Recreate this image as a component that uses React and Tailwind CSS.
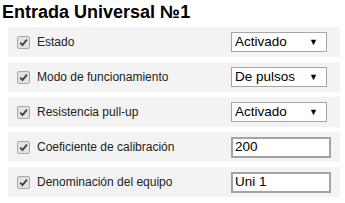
import React from "react";

const rows = [
  { label: "Estado", type: "select", value: "Activado" },
  { label: "Modo de funcionamiento", type: "select", value: "De pulsos" },
  { label: "Resistencia pull-up", type: "select", value: "Activado" },
  { label: "Coeficiente de calibración", type: "input", value: "200" },
  { label: "Denominación del equipo", type: "input", value: "Uni 1" },
];

function Check() {
  return (
    <span className="flex h-[13px] w-[13px] items-center justify-center rounded-[2px] border border-[#a8a8a8] bg-[#e3e3e3]">
      <svg width="9" height="9" viewBox="0 0 9 9">
        <path d="M1.2 4.6 L3.5 7 L7.9 1.6" fill="none" stroke="#444" strokeWidth="1.9" />
      </svg>
    </span>
  );
}

function Control({ type, value }) {
  if (type === "select") {
    return (
      <div className="flex h-[20px] w-[96px] items-center justify-between border border-[#a6a6a6] bg-white pl-[3px] pr-[8px] text-[13.5px] text-black">
        <span>{value}</span>
        <span className="text-[9px] leading-none">▼</span>
      </div>
    );
  }
  return (
    <div className="flex h-[21px] w-[100px] items-center border-2 border-[#a3a3a3] bg-white pl-[2px] text-[13.5px] text-black">
      {value}
    </div>
  );
}

export default function App() {
  return (
    <div className="h-[203px] w-[345px] bg-white" style={{ fontFamily: '"Liberation Sans", Arial, sans-serif' }}>
      <h1 className="pl-[2px] pt-[2px] text-[18px] font-bold leading-[21px] text-black">
        Entrada Universal №1
      </h1>
      <div className="mt-[4px] flex flex-col gap-[5px] pl-[8px]">
        {rows.map(r => (
          <div key={r.label} className="flex h-[30px] w-[332px] items-center bg-[#f3f3f3]">
            <div className="w-[29px] pl-[9px]">
              <Check />
            </div>
            <div className="w-[194px] text-[12px] text-[#222]">{r.label}</div>
            <Control type={r.type} value={r.value} />
          </div>
        ))}
      </div>
    </div>
  );
}
